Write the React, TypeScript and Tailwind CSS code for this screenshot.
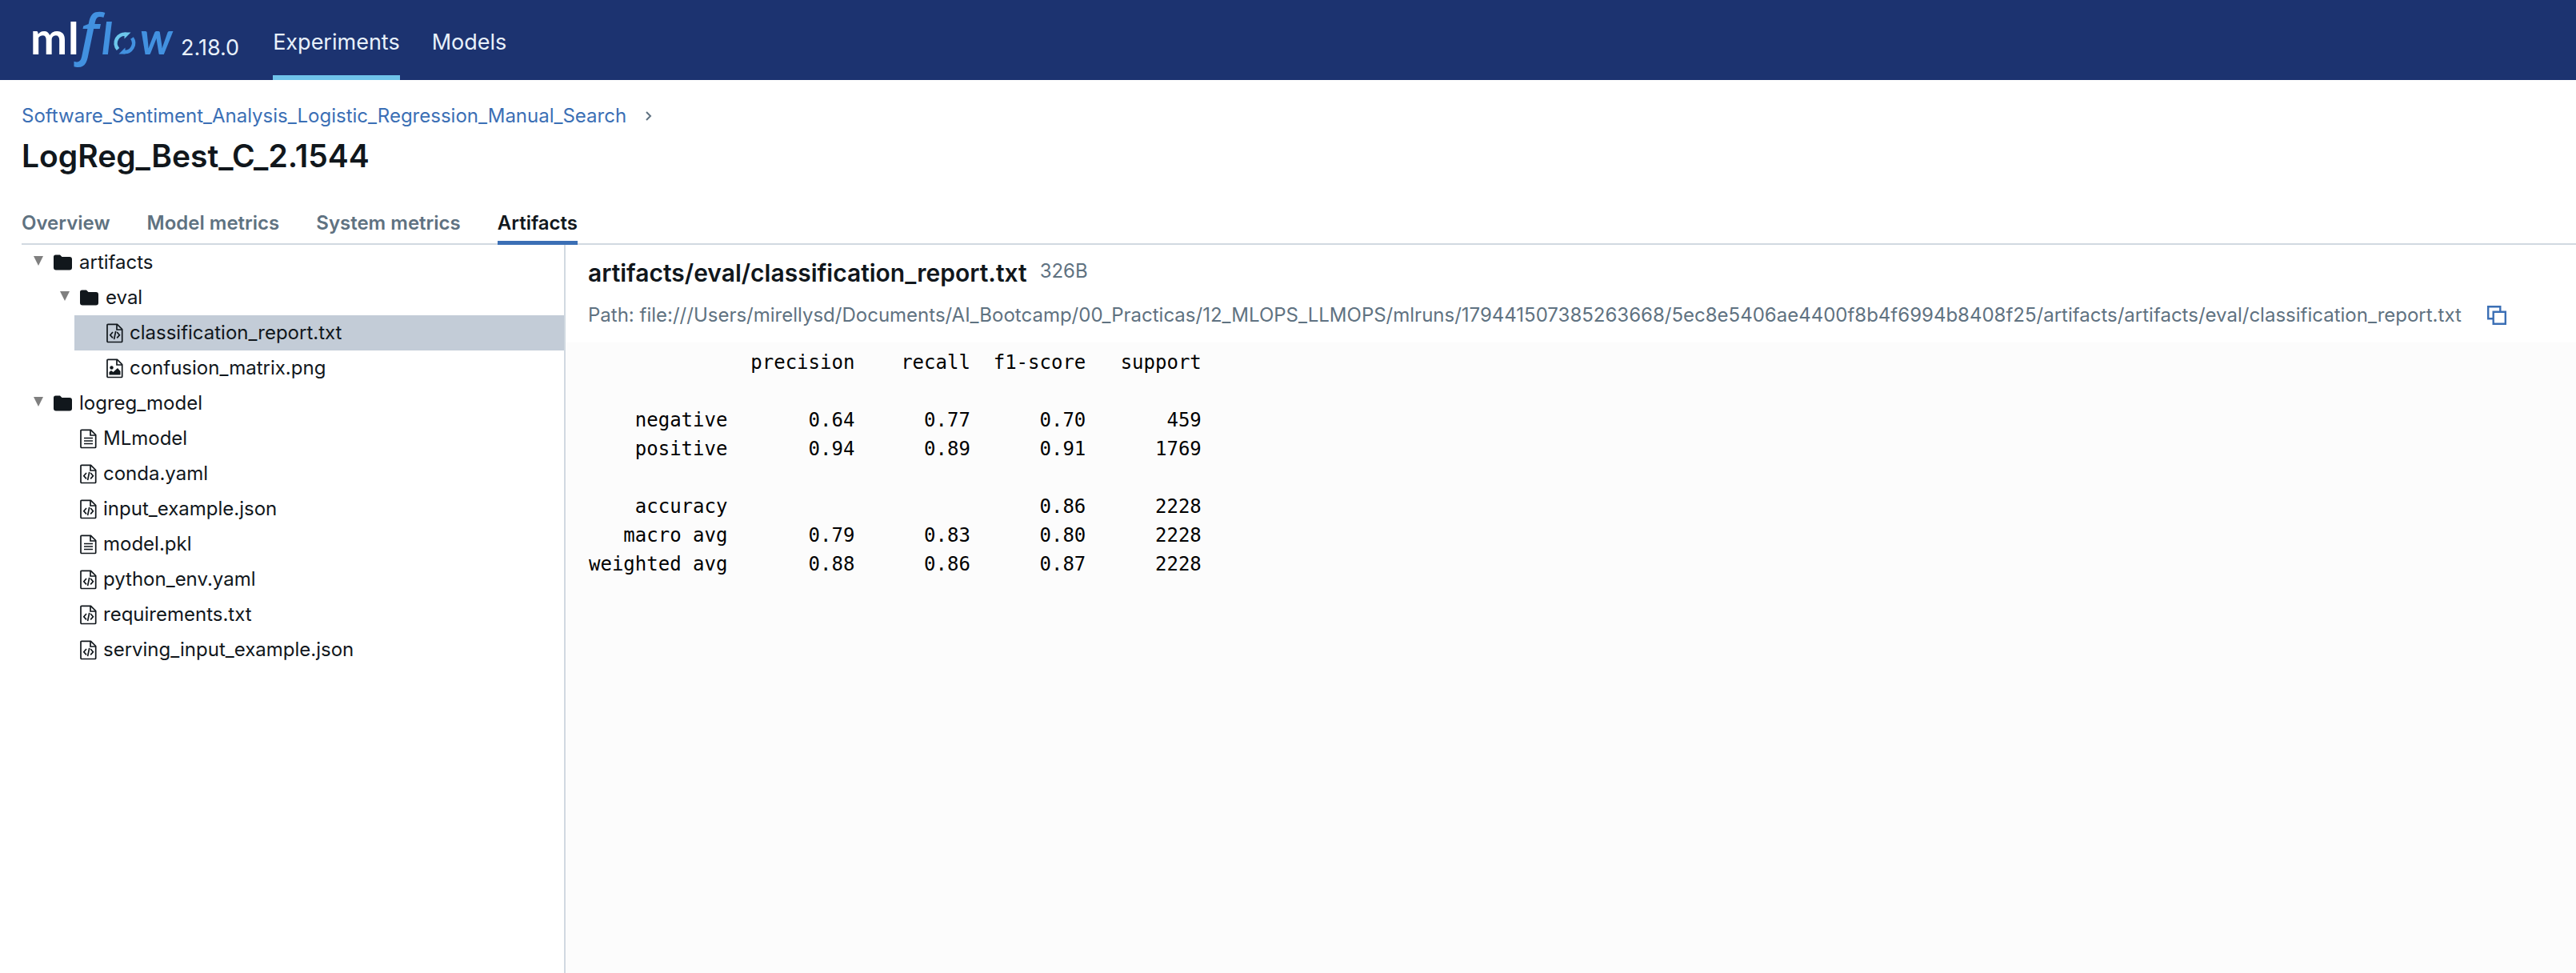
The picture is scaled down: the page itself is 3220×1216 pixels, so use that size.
import React from "react";

type FileKind = "folder" | "code" | "text" | "image";

type Node = {
  name: string;
  kind: FileKind;
  selected?: boolean;
  children?: Node[];
};

const TREE: Node[] = [
  {
    name: "artifacts",
    kind: "folder",
    children: [
      {
        name: "eval",
        kind: "folder",
        children: [
          { name: "classification_report.txt", kind: "code", selected: true },
          { name: "confusion_matrix.png", kind: "image" },
        ],
      },
    ],
  },
  {
    name: "logreg_model",
    kind: "folder",
    children: [
      { name: "MLmodel", kind: "text" },
      { name: "conda.yaml", kind: "code" },
      { name: "input_example.json", kind: "code" },
      { name: "model.pkl", kind: "text" },
      { name: "python_env.yaml", kind: "code" },
      { name: "requirements.txt", kind: "code" },
      { name: "serving_input_example.json", kind: "code" },
    ],
  },
];

const REPORT = `              precision    recall  f1-score   support

    negative       0.64      0.77      0.70       459
    positive       0.94      0.89      0.91      1769

    accuracy                           0.86      2228
   macro avg       0.79      0.83      0.80      2228
weighted avg       0.88      0.86      0.87      2228
`;

const PATH =
  "file:///Users/mirellysd/Documents/AI_Bootcamp/00_Practicas/12_MLOPS_LLMOPS/mlruns/179441507385263668/5ec8e5406ae4400f8b4f6994b8408f25/artifacts/artifacts/eval/classification_report.txt";

const TABS = ["Overview", "Model metrics", "System metrics", "Artifacts"];

function Logo() {
  return (
    <svg width="180" height="72" viewBox="0 0 180 72" role="img" aria-label="mlflow" className="overflow-visible">
      <text x="-2" y="54" fontFamily="Lato" fontWeight="700" fontSize="55" fill="#fff">m</text>
      <text x="45" y="54" fontFamily="Lato" fontWeight="700" fontSize="55" fill="#fff">l</text>
      <text x="60" y="53" fontFamily="Open Sans" fontStyle="italic" fontWeight="600" fontSize="68" fill="#4291e0">f</text>
      <text x="87" y="54" fontFamily="Lato" fontStyle="italic" fontWeight="700" fontSize="55" fill="#4291e0">l</text>
      <text x="135" y="54" fontFamily="Lato" fontStyle="italic" fontWeight="700" fontSize="55" fill="#4291e0">w</text>
      <path d="M107.500 47.500 A11.200 11.200 0 0 1 118 29" fill="none" stroke="#6cc7ec" strokeWidth="4.500" />
      <path d="M115.500 26.500h8L115.500 34.500z" fill="#6cc7ec" />
      <path d="M125 33.500 A11.200 11.200 0 0 1 114.500 51" fill="none" stroke="#4291e0" strokeWidth="4.500" />
      <path d="M108.500 53.500l8-8v8z" fill="#4291e0" />
    </svg>
  );
}

function FolderIcon() {
  return (
    <svg width="23" height="20" viewBox="0 0 23 20" fill="currentColor" aria-hidden="true">
      <path d="M2.500 0.500h5.500L10.500 3h9.500a3 3 0 0 1 3 3v10.500a3 3 0 0 1-3 3H3a3 3 0 0 1-3-3V3a2.500 2.500 0 0 1 2.500-2.500z" />
    </svg>
  );
}

function FileIcon({ kind }: { kind: FileKind }) {
  return (
    <svg width="21" height="25" viewBox="0 0 21 25" fill="none" stroke="currentColor" strokeWidth="1.700" aria-hidden="true">
      <path d="M2 1.300h11.500L19.700 7.500V22.500a1 1 0 0 1-1 1H2a1 1 0 0 1-1-1V2.300a1 1 0 0 1 1-1z" strokeLinejoin="round" />
      <path d="M13 1.500V8h6.500" />
      {kind === "code" && (
        <path d="M8 11l-3.200 3.700L8 18.400M13.200 11l3.200 3.700-3.200 3.700M11.700 9.800L9.600 20.200" />
      )}
      {kind === "text" && <path d="M5 11.500h11M5 15h11M5 18.500h11" />}
      {kind === "image" && (
        <g fill="currentColor" stroke="none">
          <circle cx="6.500" cy="11.500" r="2.200" />
          <path d="M3.500 20.500v-3.500l2.500-2 2.500 2 5.500-5 3.500 4v4.500z" />
        </g>
      )}
    </svg>
  );
}

function CopyIcon() {
  return (
    <svg width="24" height="24" viewBox="0 0 24 24" fill="none" stroke="currentColor" strokeWidth="2.400" aria-hidden="true">
      <path d="M7.500 16.300H1.200V1.200h15.100v6" />
      <path d="M7.700 7.700h15.100v15.100H7.700z" />
    </svg>
  );
}

function TreeItem({ node }: { node: Node }) {
  if (node.kind === "folder") {
    return (
      <li>
        <button type="button" aria-expanded="true" className="flex h-11 w-full items-center text-left">
          <span className="flex w-10 shrink-0 items-center pb-1 pl-[15px]">
            <svg width="12" height="12" viewBox="0 0 12 12" fill="#7f7f7f" aria-hidden="true">
              <path d="M0 0h12L6 12z" />
            </svg>
          </span>
          <FolderIcon />
          <span className="pl-[9px]">{node.name}</span>
        </button>
        <ul className="pl-[33px]">
          {node.children?.map((child) => <TreeItem key={child.name} node={child} />)}
        </ul>
      </li>
    );
  }
  return (
    <li>
      <button
        type="button"
        className={
          node.selected
            ? "flex h-11 w-full items-center gap-2 bg-[#c3ccd7] pl-10 text-left"
            : "flex h-11 w-full items-center gap-2 pl-10 text-left"
        }
      >
        <FileIcon kind={node.kind} />
        <span>{node.name}</span>
      </button>
    </li>
  );
}

export default function App() {
  return (
    <div className="flex min-h-screen flex-col bg-white font-['Inter',sans-serif] text-2xl text-[#11171c]">
      <header className="flex h-[100px] shrink-0 items-stretch bg-[#1c3370] pl-10 text-[#e8f1fb]">
        <a href="#home" className="flex items-center">
          <Logo />
        </a>
        <span className="flex items-end pb-6 pl-1.5 text-[27px] leading-8">2.18.0</span>
        <nav className="ml-[42px] flex gap-10 text-[27px]">
          <a href="#experiments" className="flex items-center border-b-[6px] border-[#6fc3ea] pt-3">Experiments</a>
          <a href="#models" className="flex items-center pt-1.5">Models</a>
        </nav>
      </header>

      <div className="flex flex-1 flex-col pl-[27px]">
        <nav aria-label="Breadcrumb" className="flex items-center gap-6 pt-[25px] leading-10">
          <a href="#experiment" className="text-[#3b6fb5]">
            Software_Sentiment_Analysis_Logistic_Regression_Manual_Search
          </a>
          <svg width="8" height="12" viewBox="0 0 8 12" fill="none" stroke="#5f7281" strokeWidth="2" aria-hidden="true">
            <path d="M1 1l5 5-5 5" />
          </svg>
        </nav>
        <h1 className="pt-1.5 text-[39px] leading-12 font-semibold">LogReg_Best_C_2.1544</h1>

        <div role="tablist" className="mt-[37px] flex h-[50px] gap-[46px] border-b-2 border-[#d1d9e1] font-semibold text-[#5f7281]">
          {TABS.map((tab) => (
            <button
              key={tab}
              type="button"
              role="tab"
              aria-selected={tab === "Artifacts"}
              className={
                tab === "Artifacts"
                  ? "-mb-0.5 border-b-5 border-[#3b6fb5] text-[#11171c]"
                  : "pb-[3px]"
              }
            >
              {tab}
            </button>
          ))}
        </div>

        <div className="flex flex-1">
          <aside className="w-[680px] shrink-0 border-r-2 border-[#d1d9e1]">
            <ul>
              {TREE.map((node) => <TreeItem key={node.name} node={node} />)}
            </ul>
          </aside>
          <main className="flex min-w-0 flex-1 flex-col">
            <div className="px-7 pt-[11px]">
              <div className="flex items-center gap-4">
                <h2 className="text-[30px] leading-12 font-semibold">artifacts/eval/classification_report.txt</h2>
                <span className="pb-1 text-[#5f7281]">326B</span>
              </div>
              <div className="flex items-center gap-8 pt-[13px] pb-[18px] leading-8 text-[#5f7281]">
                <span className="whitespace-nowrap">Path: {PATH}</span>
                <button type="button" aria-label="Copy path" className="text-[#3b6fb5]">
                  <CopyIcon />
                </button>
              </div>
            </div>
            <pre className="flex-1 bg-[#fcfcfc] px-[29px] pt-[7px] font-['DejaVu_Sans_Mono',monospace] leading-9 text-black">{REPORT}</pre>
          </main>
        </div>
      </div>
    </div>
  );
}
